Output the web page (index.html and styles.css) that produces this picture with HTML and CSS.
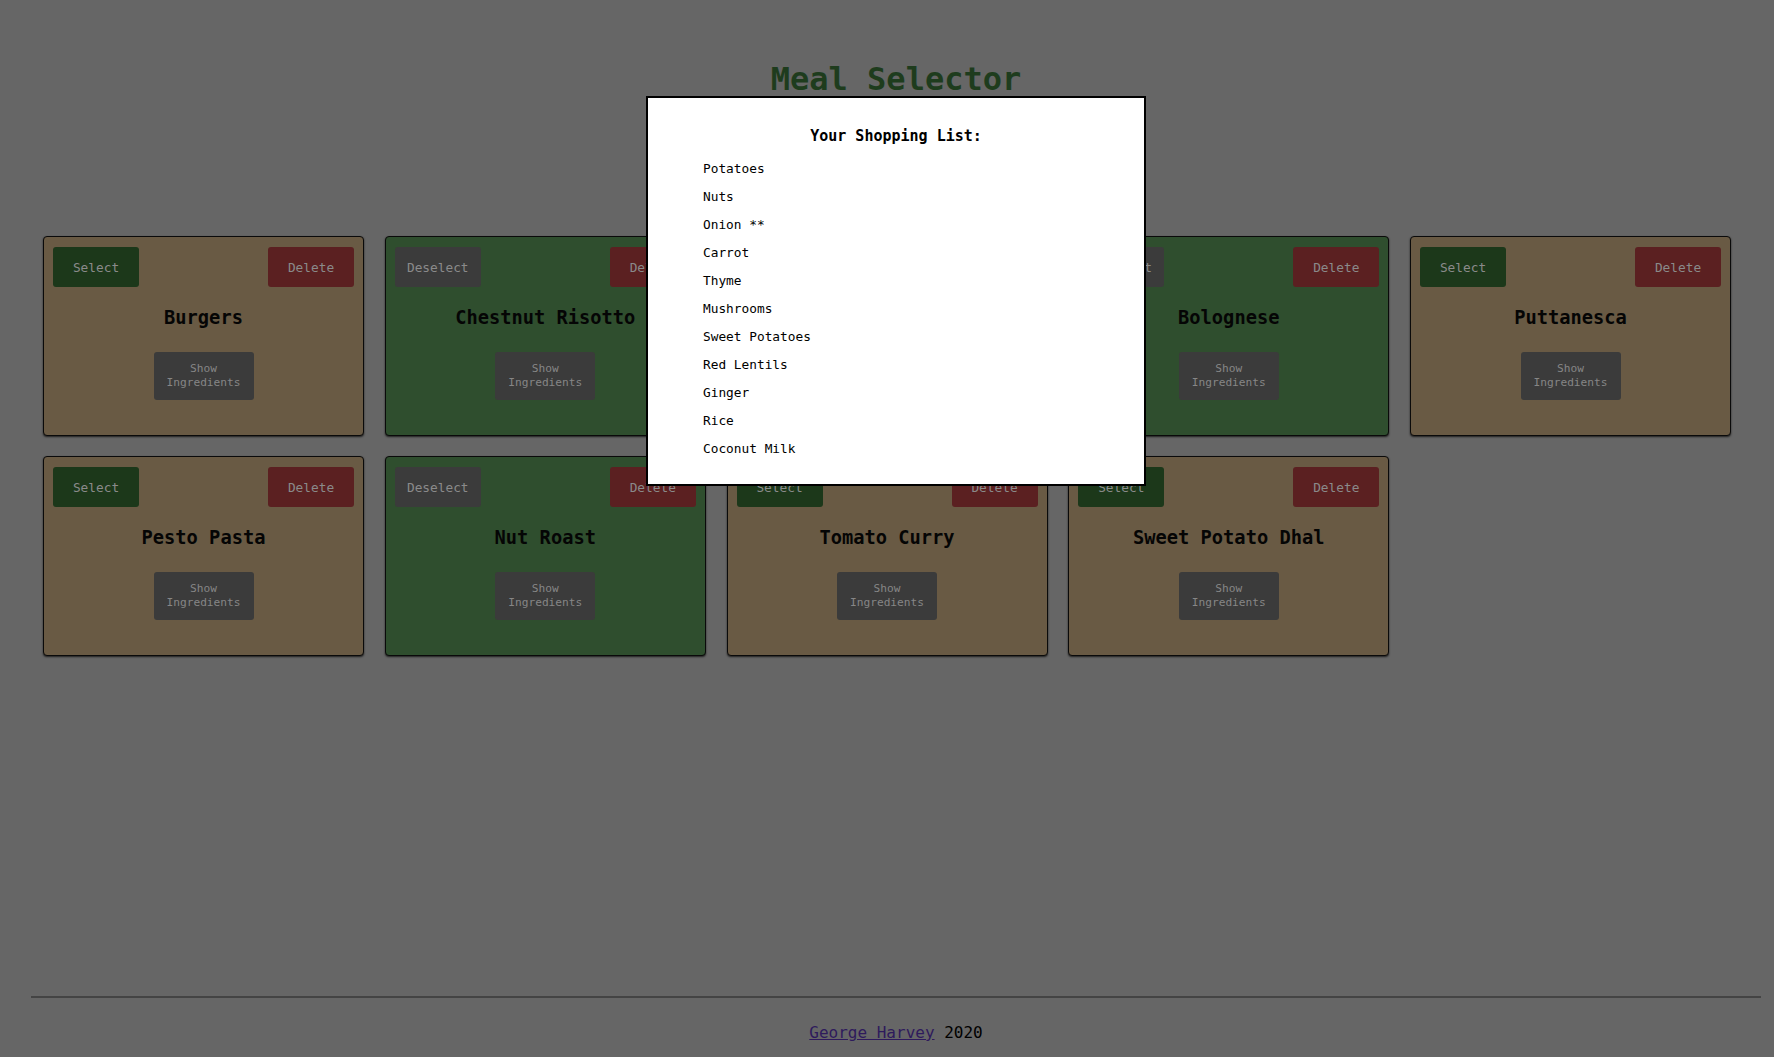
FILE: index.html
```html
<!DOCTYPE html>
<html lang="en">
<head>
<meta charset="utf-8">
<title>Meal Selector</title>
<link rel="stylesheet" href="styles.css">
</head>
<body>
<div class="page">
  <header class="header">
    <h1 class="title">Meal Selector</h1>
  </header>
  <main class="grid">
    <div class="card">
      <div class="card-top"><button class="btn btn-select">Select</button><button class="btn btn-delete">Delete</button></div>
      <h3 class="meal-name">Burgers</h3>
      <button class="btn-show">Show Ingredients</button>
    </div>
    <div class="card card-selected">
      <div class="card-top"><button class="btn btn-deselect">Deselect</button><button class="btn btn-delete">Delete</button></div>
      <h3 class="meal-name">Chestnut Risotto</h3>
      <button class="btn-show">Show Ingredients</button>
    </div>
    <div class="card card-selected">
      <div class="card-top"><button class="btn btn-deselect">Deselect</button><button class="btn btn-delete">Delete</button></div>
      <h3 class="meal-name">Shepherds Pie</h3>
      <button class="btn-show">Show Ingredients</button>
    </div>
    <div class="card card-selected">
      <div class="card-top"><button class="btn btn-deselect">Deselect</button><button class="btn btn-delete">Delete</button></div>
      <h3 class="meal-name">Bolognese</h3>
      <button class="btn-show">Show Ingredients</button>
    </div>
    <div class="card">
      <div class="card-top"><button class="btn btn-select">Select</button><button class="btn btn-delete">Delete</button></div>
      <h3 class="meal-name">Puttanesca</h3>
      <button class="btn-show">Show Ingredients</button>
    </div>
    <div class="card">
      <div class="card-top"><button class="btn btn-select">Select</button><button class="btn btn-delete">Delete</button></div>
      <h3 class="meal-name">Pesto Pasta</h3>
      <button class="btn-show">Show Ingredients</button>
    </div>
    <div class="card card-selected">
      <div class="card-top"><button class="btn btn-deselect">Deselect</button><button class="btn btn-delete">Delete</button></div>
      <h3 class="meal-name">Nut Roast</h3>
      <button class="btn-show">Show Ingredients</button>
    </div>
    <div class="card">
      <div class="card-top"><button class="btn btn-select">Select</button><button class="btn btn-delete">Delete</button></div>
      <h3 class="meal-name">Tomato Curry</h3>
      <button class="btn-show">Show Ingredients</button>
    </div>
    <div class="card">
      <div class="card-top"><button class="btn btn-select">Select</button><button class="btn btn-delete">Delete</button></div>
      <h3 class="meal-name">Sweet Potato Dhal</h3>
      <button class="btn-show">Show Ingredients</button>
    </div>
  </main>
  <footer class="footer">
    <hr class="rule">
    <p class="credit"><a class="credit-link" href="#">George Harvey</a> 2020</p>
  </footer>
</div>

<div class="modal">
  <h3 class="modal-title">Your Shopping List:</h3>
  <ul class="list">
    <li>Potatoes</li>
    <li>Nuts</li>
    <li>Onion **</li>
    <li>Carrot</li>
    <li>Thyme</li>
    <li>Mushrooms</li>
    <li>Sweet Potatoes</li>
    <li>Red Lentils</li>
    <li>Ginger</li>
    <li>Rice</li>
    <li>Coconut Milk</li>
  </ul>
</div>
</body>
</html>
```

FILE: styles.css
```css
html, body {
  margin: 0;
  padding: 0;
}

body {
  background: #666666;
  font-family: "DejaVu Sans Mono", "Liberation Mono", monospace;
  color: #000;
}

.page {
  margin-left: 31px;
  width: 1730px;
}

.header {
  padding-top: 61px;
  height: 236px;
  box-sizing: border-box;
}

.title {
  margin: 0;
  text-align: center;
  font-size: 32px;
  font-weight: bold;
  color: #1e3c1d;
  line-height: 37px;
}

.grid {
  display: flex;
  flex-wrap: wrap;
  gap: 20px 20.75px;
  padding-left: 12px;
  min-height: 760px;
  align-content: flex-start;
}

.card {
  width: 321px;
  height: 200px;
  box-sizing: border-box;
  background: #695a44;
  border: 1px solid #0a0a0a;
  border-radius: 4px;
  box-shadow: 0 1px 2px rgba(0, 0, 0, 0.7);
  padding: 10px 9px;
  display: flex;
  flex-direction: column;
  align-items: center;
}

.card-selected {
  background: #2f4e2e;
}

.card-top {
  width: 100%;
  display: flex;
  justify-content: space-between;
}

.btn {
  width: 86px;
  height: 40px;
  border: none;
  border-radius: 3px;
  font-family: "DejaVu Sans Mono", "Liberation Mono", monospace;
  font-size: 12.8px;
  color: #8a8a8a;
  padding: 0;
}

.btn-select {
  background: #1c381a;
}

.btn-deselect {
  background: #3b3b3b;
}

.btn-delete {
  background: #5b2021;
}

.meal-name {
  margin: 19.7px 0 0;
  font-size: 18.72px;
  line-height: 21.8px;
  font-weight: bold;
  color: #050505;
}

.btn-show {
  margin-top: 23.5px;
  width: 100px;
  height: 48px;
  border: none;
  border-radius: 3px;
  background: #3b3b3b;
  color: #868686;
  font-family: "DejaVu Sans Mono", "Liberation Mono", monospace;
  font-size: 11.2px;
  line-height: 14px;
  padding: 10px 8px;
}

.footer {
  text-align: center;
}

.rule {
  margin: 0;
  height: 0;
  border: none;
  border-top: 2px solid #444444;
}

.credit {
  margin: 25px 0 0;
  font-size: 16px;
  line-height: 19px;
}

.credit-link {
  color: #2e1a5c;
}

.modal {
  position: fixed;
  left: 646px;
  top: 96px;
  width: 500px;
  box-sizing: border-box;
  background: #fff;
  border: 2px solid #000;
  padding: 15px;
}

.modal-title {
  margin: 15px 0;
  text-align: center;
  font-size: 15px;
  line-height: 17.5px;
  font-weight: bold;
}

.list {
  list-style: none;
  margin: 0;
  padding: 0 0 0 40px;
  font-size: 12.8px;
}

.list li {
  line-height: 15px;
  margin: 13px 0;
}
```
